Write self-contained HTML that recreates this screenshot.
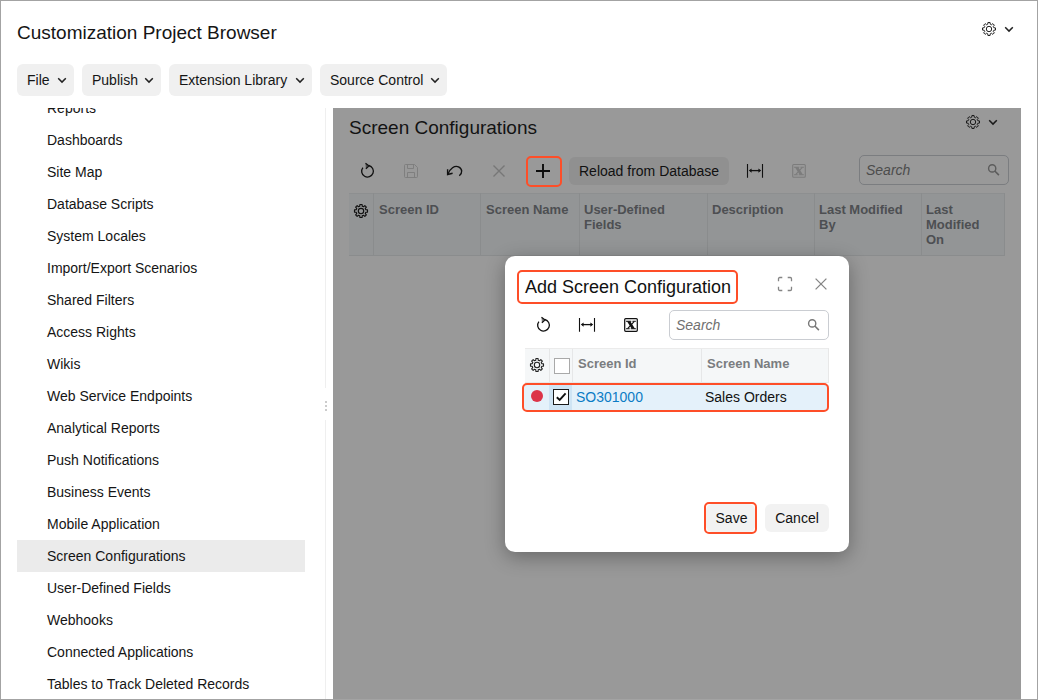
<!DOCTYPE html>
<html><head><meta charset="utf-8"><title>Customization Project Browser</title>
<style>
*{box-sizing:border-box;margin:0;padding:0}
html,body{width:1038px;height:700px;overflow:hidden;background:#fff}
body{font-family:"Liberation Sans",Arial,sans-serif;font-size:14px;color:#151515;position:relative}
.abs{position:absolute}
#frame{position:absolute;left:0;top:0;width:1038px;height:700px;border:1px solid #a3a3a3;z-index:50;pointer-events:none}
#title{left:17px;top:22px;font-size:19px;line-height:22px;white-space:nowrap}
.mbtn{position:absolute;top:64px;height:32px;background:#f0f0f0;border-radius:6px;line-height:32px;padding-left:10px;white-space:nowrap}
.mbtn svg{position:absolute;right:7px;top:13px}
#tree{left:17px;top:108px;width:288px;height:592px;overflow:hidden}
.ti{position:absolute;left:0;width:288px;height:32px;line-height:32px;padding-left:30px;white-space:nowrap}
.ti.sel{background:#ebebeb}
#split{left:325px;top:108px;width:1px;height:592px;background:#ececec}
#panel{left:333px;top:108px;width:688px;height:592px;background:#999}
#ptitle{left:16px;top:9px;font-size:19px;line-height:22px;white-space:nowrap;color:#131313}
.hdr{position:absolute;left:16px;top:85px;width:656px;height:63px;background:#939596;border-top:1px solid #8d8f90;border-bottom:1px solid #8a8c8d}
.hc{position:absolute;top:-1px;height:63px;border-left:1px solid #8a8c8d;font-weight:bold;font-size:13px;line-height:15px;color:#4d4f52;padding:9px 0 0 4px}
#reload{left:236px;top:49px;width:160px;height:28px;border-radius:6px;background:#909090;line-height:28px;padding-left:10px;color:#111;white-space:nowrap}
.search{position:absolute;height:30px;border:1px solid #cacdd2;border-radius:5px;font-style:italic;line-height:29px;padding-left:6px;color:#707070}
#dlg{left:505px;top:256px;width:344px;height:296px;background:#fff;border-radius:10px;box-shadow:0 5px 20px rgba(0,0,0,.32)}
#dtitle{left:20px;top:20px;font-size:18px;line-height:22px;white-space:nowrap;color:#111}
.hl{position:absolute;border:2px solid #fe4e28;border-radius:5px}
#dh{left:20px;top:92px;width:304px;height:35px;background:#f5f7f8;border-top:1px solid #ebebeb;border-bottom:1px solid #e8e8e8;border-right:1px solid #e8e8e8}
.dhc{position:absolute;top:0;height:33px;border-left:1px solid #e6e7e8;font-weight:bold;font-size:13px;line-height:30px;color:#7a7d80;padding-left:5px;white-space:nowrap}
#drow{left:19px;top:129px;width:305px;height:25px;background:#e4f1fa}
.cb{position:absolute;width:16px;height:16px;background:#fff}
.btn{position:absolute;top:248px;height:28px;border-radius:6px;background:#f2f2f2;line-height:28px;text-align:center;color:#111}
</style></head><body>
<div id="frame"></div>
<div id="title" class="abs">Customization Project Browser</div>
<svg class="abs" style="left:981px;top:21px" width="16" height="16" viewBox="0 0 16 16"><path d="M6.79 3.15 L6.92 1.49 L9.08 1.49 L9.21 3.15 L10.58 3.72 L11.84 2.63 L13.37 4.16 L12.28 5.42 L12.85 6.79 L14.51 6.92 L14.51 9.08 L12.85 9.21 L12.28 10.58 L13.37 11.84 L11.84 13.37 L10.58 12.28 L9.21 12.85 L9.08 14.51 L6.92 14.51 L6.79 12.85 L5.42 12.28 L4.16 13.37 L2.63 11.84 L3.72 10.58 L3.15 9.21 L1.49 9.08 L1.49 6.92 L3.15 6.79 L3.72 5.42 L2.63 4.16 L4.16 2.63 L5.42 3.72Z" fill="none" stroke="#222" stroke-width="1.0" stroke-linejoin="round"/><circle cx="8" cy="8" r="2.7" fill="none" stroke="#222" stroke-width="1.0"/></svg>
<svg class="abs" style="left:1004px;top:26px" width="10" height="7" viewBox="0 0 10 7"><path d="M1.2 1.3L5 5.1L8.8 1.3" fill="none" stroke="#222" stroke-width="1.5"/></svg>
<div class="mbtn" style="left:17px;width:57px">File<svg width="10" height="7" viewBox="0 0 10 7"><path d="M1.2 1.3L5 5.1L8.8 1.3" fill="none" stroke="#222" stroke-width="1.5"/></svg></div>
<div class="mbtn" style="left:82px;width:79px">Publish<svg width="10" height="7" viewBox="0 0 10 7"><path d="M1.2 1.3L5 5.1L8.8 1.3" fill="none" stroke="#222" stroke-width="1.5"/></svg></div>
<div class="mbtn" style="left:169px;width:143px">Extension Library<svg width="10" height="7" viewBox="0 0 10 7"><path d="M1.2 1.3L5 5.1L8.8 1.3" fill="none" stroke="#222" stroke-width="1.5"/></svg></div>
<div class="mbtn" style="left:320px;width:127px">Source Control<svg width="10" height="7" viewBox="0 0 10 7"><path d="M1.2 1.3L5 5.1L8.8 1.3" fill="none" stroke="#222" stroke-width="1.5"/></svg></div>

<div id="tree" class="abs">
<div class="ti" style="top:-16px">Reports</div>
<div class="ti" style="top:16px">Dashboards</div>
<div class="ti" style="top:48px">Site Map</div>
<div class="ti" style="top:80px">Database Scripts</div>
<div class="ti" style="top:112px">System Locales</div>
<div class="ti" style="top:144px">Import/Export Scenarios</div>
<div class="ti" style="top:176px">Shared Filters</div>
<div class="ti" style="top:208px">Access Rights</div>
<div class="ti" style="top:240px">Wikis</div>
<div class="ti" style="top:272px">Web Service Endpoints</div>
<div class="ti" style="top:304px">Analytical Reports</div>
<div class="ti" style="top:336px">Push Notifications</div>
<div class="ti" style="top:368px">Business Events</div>
<div class="ti" style="top:400px">Mobile Application</div>
<div class="ti sel" style="top:432px">Screen Configurations</div>
<div class="ti" style="top:464px">User-Defined Fields</div>
<div class="ti" style="top:496px">Webhooks</div>
<div class="ti" style="top:528px">Connected Applications</div>
<div class="ti" style="top:560px">Tables to Track Deleted Records</div>
</div>
<div class="abs" style="left:325px;top:108px;width:1px;height:280px;background:#efefef"></div>
<div class="abs" style="left:325px;top:420px;width:1px;height:280px;background:#efefef"></div>
<div class="abs" style="left:325px;top:401px;width:2px;height:2px;background:#ccc"></div>
<div class="abs" style="left:325px;top:405px;width:2px;height:2px;background:#ccc"></div>
<div class="abs" style="left:325px;top:409px;width:2px;height:2px;background:#ccc"></div>

<div id="panel" class="abs">
<div id="ptitle" class="abs">Screen Configurations</div>
<svg class="abs" style="left:632px;top:6px" width="16" height="16" viewBox="0 0 16 16"><path d="M6.79 3.15 L6.92 1.49 L9.08 1.49 L9.21 3.15 L10.58 3.72 L11.84 2.63 L13.37 4.16 L12.28 5.42 L12.85 6.79 L14.51 6.92 L14.51 9.08 L12.85 9.21 L12.28 10.58 L13.37 11.84 L11.84 13.37 L10.58 12.28 L9.21 12.85 L9.08 14.51 L6.92 14.51 L6.79 12.85 L5.42 12.28 L4.16 13.37 L2.63 11.84 L3.72 10.58 L3.15 9.21 L1.49 9.08 L1.49 6.92 L3.15 6.79 L3.72 5.42 L2.63 4.16 L4.16 2.63 L5.42 3.72Z" fill="none" stroke="#1a1a1a" stroke-width="1.0" stroke-linejoin="round"/><circle cx="8" cy="8" r="2.7" fill="none" stroke="#1a1a1a" stroke-width="1.0"/></svg>
<svg class="abs" style="left:655px;top:11px" width="10" height="7" viewBox="0 0 10 7"><path d="M1.2 1.3L5 5.1L8.8 1.3" fill="none" stroke="#1a1a1a" stroke-width="1.5"/></svg>
<svg class="abs" style="left:25px;top:54.4px" width="18" height="18" viewBox="0 0 18 18"><path d="M10.8 3.5A5.85 5.85 0 1 1 4.9 5.6" fill="none" stroke="#111" stroke-width="1.3"/><path d="M7.5 1.3L11.2 3.9L7.9 6.8" fill="#111" fill-opacity="0.55" stroke="#111" stroke-width="1.2" stroke-linejoin="round"/></svg>
<svg class="abs" style="left:70px;top:55px" width="16" height="16" viewBox="0 0 16 16"><path d="M2.5 1.5H11.5L14.5 4.5V13.5A1 1 0 0 1 13.5 14.5H2.500A1 1 0 0 1 1.5 13.5V2.5A1 1 0 0 1 2.5 1.500Z" fill="none" stroke="#7f7f7f" stroke-width="1"/><path d="M4.5 1.5V5.5H10.5V1.5M4.5 14.5V9.5H11.5V14.5" fill="none" stroke="#7f7f7f" stroke-width="1"/></svg>
<svg class="abs" style="left:113px;top:55px" width="18" height="16" viewBox="0 0 18 16"><path d="M2 11C4 5.500 8.600 2.200 12.500 3.800C16.400 5.600 16.800 10 13.300 12.800" fill="none" stroke="#111" stroke-width="1.4"/><path d="M1.600 6.200V11.500L6.600 10.200" fill="none" stroke="#111" stroke-width="1.4"/></svg>
<svg class="abs" style="left:159px;top:56px" width="14" height="14" viewBox="0 0 14 14"><path d="M1.500 1.500L12.500 12.500M12.500 1.500L1.500 12.500" stroke="#777" stroke-width="1.4" fill="none"/></svg>
<div class="hl" style="left:193px;top:48px;width:36px;height:31px"></div>
<svg class="abs" style="left:202px;top:55px" width="16" height="16" viewBox="0 0 16 16"><path d="M8 1V15M1 8H15" stroke="#0c0c0c" stroke-width="1.900" fill="none"/></svg>
<div id="reload" class="abs">Reload from Database</div>
<svg class="abs" style="left:412px;top:55px" width="20" height="16" viewBox="0 0 20 16"><path d="M2.5 1V14.8M17.5 1V14.8" stroke="#111" stroke-width="1.1" fill="none"/><path d="M5 7.6H15" stroke="#111" stroke-width="1.3" fill="none"/><path d="M3.8 7.6L6.6 5.5V9.7ZM16.2 7.6L13.4 5.5V9.7Z" fill="#111"/></svg>
<svg class="abs" style="left:458px;top:55px" width="16" height="16" viewBox="0 0 16 16"><rect x="1.7" y="1.5" width="12.6" height="12.8" rx="1" fill="none" stroke="#7c7c7c" stroke-width="1.1"/><path d="M4 4.2H7.300L12 11.800H8.700Z" fill="#7c7c7c"/><path d="M11.300 4.300L4.600 11.700" stroke="#7c7c7c" stroke-width="1.1" fill="none"/><path d="M3 3.700H8.300V4.800H3ZM9.400 3.700H12.900V4.700H9.400ZM3 11.200H6.700V12.300H3ZM7.700 11.200H12.900V12.300H7.700Z" fill="#7c7c7c"/></svg>
<div class="search" style="left:526px;top:47px;width:150px;border-color:#7b7d80;color:#4c4c4c">Search</div>
<svg class="abs" style="left:652px;top:54px" width="16" height="16" viewBox="0 0 16 16"><circle cx="7.2" cy="6.400" r="3.600" fill="none" stroke="#5c5c5c" stroke-width="1.400"/><path d="M9.800 9L13.900 13.100" stroke="#5c5c5c" stroke-width="1.600" fill="none"/></svg>
<div class="hdr">
<svg class="abs" style="left:4px;top:8.5px" width="16" height="16" viewBox="0 0 16 16"><path d="M6.79 3.15 L6.92 1.49 L9.08 1.49 L9.21 3.15 L10.58 3.72 L11.84 2.63 L13.37 4.16 L12.28 5.42 L12.85 6.79 L14.51 6.92 L14.51 9.08 L12.85 9.21 L12.28 10.58 L13.37 11.84 L11.84 13.37 L10.58 12.28 L9.21 12.85 L9.08 14.51 L6.92 14.51 L6.79 12.85 L5.42 12.28 L4.16 13.37 L2.63 11.84 L3.72 10.58 L3.15 9.21 L1.49 9.08 L1.49 6.92 L3.15 6.79 L3.72 5.42 L2.63 4.16 L4.16 2.63 L5.42 3.72Z" fill="none" stroke="#111" stroke-width="1.15" stroke-linejoin="round"/><circle cx="8" cy="8" r="2.7" fill="none" stroke="#111" stroke-width="1.15"/></svg>
<div class="hc" style="left:24px;width:107px;padding-left:5px">Screen ID</div>
<div class="hc" style="left:131px;width:99px;padding-left:5px">Screen Name</div>
<div class="hc" style="left:230px;width:128px">User-Defined<br>Fields</div>
<div class="hc" style="left:358px;width:107px">Description</div>
<div class="hc" style="left:465px;width:107px">Last Modified<br>By</div>
<div class="hc" style="left:572px;width:84px;border-right:1px solid #8a8c8d">Last<br>Modified<br>On</div>
</div>
</div>

<div id="dlg" class="abs">
<div class="hl" style="left:12px;top:14px;width:221px;height:34px"></div>
<div id="dtitle" class="abs">Add Screen Configuration</div>
<svg class="abs" style="left:272px;top:20px" width="16" height="16" viewBox="0 0 16 16"><path d="M1.500 5.300V2.700A1.200 1.200 0 0 1 2.700 1.500H5.300M10.700 1.500H13.300A1.200 1.200 0 0 1 14.500 2.700V5.300M14.500 10.700V13.300A1.200 1.200 0 0 1 13.300 14.500H10.700M5.300 14.500H2.700A1.200 1.200 0 0 1 1.500 13.300V10.700" fill="none" stroke="#858585" stroke-width="1.3"/></svg>
<svg class="abs" style="left:309px;top:21px" width="14" height="14" viewBox="0 0 14 14"><path d="M1.600 1.600L12.400 12.400M12.400 1.600L1.600 12.400" stroke="#858585" stroke-width="1.3" fill="none"/></svg>
<svg class="abs" style="left:29px;top:60px" width="18" height="18" viewBox="0 0 18 18"><path d="M10.8 3.5A5.85 5.85 0 1 1 4.9 5.6" fill="none" stroke="#111" stroke-width="1.3"/><path d="M7.5 1.3L11.2 3.9L7.9 6.8" fill="#111" fill-opacity="0.55" stroke="#111" stroke-width="1.2" stroke-linejoin="round"/></svg>
<svg class="abs" style="left:72px;top:61px" width="20" height="16" viewBox="0 0 20 16"><path d="M2.5 1V14.8M17.5 1V14.8" stroke="#111" stroke-width="1.1" fill="none"/><path d="M5 7.6H15" stroke="#111" stroke-width="1.3" fill="none"/><path d="M3.8 7.6L6.6 5.5V9.7ZM16.2 7.6L13.4 5.5V9.7Z" fill="#111"/></svg>
<svg class="abs" style="left:118px;top:61px" width="16" height="16" viewBox="0 0 16 16"><rect x="1.7" y="1.5" width="12.6" height="12.8" rx="1" fill="none" stroke="#111" stroke-width="1.25"/><path d="M4 4.2H7.300L12 11.800H8.700Z" fill="#111"/><path d="M11.300 4.300L4.600 11.700" stroke="#111" stroke-width="1.1" fill="none"/><path d="M3 3.700H8.300V4.800H3ZM9.400 3.700H12.900V4.700H9.400ZM3 11.200H6.700V12.300H3ZM7.700 11.200H12.900V12.300H7.700Z" fill="#111"/></svg>
<div class="search" style="left:164px;top:54px;width:160px">Search</div>
<svg class="abs" style="left:300px;top:61px" width="16" height="16" viewBox="0 0 16 16"><circle cx="7.2" cy="6.400" r="3.600" fill="none" stroke="#777" stroke-width="1.400"/><path d="M9.800 9L13.900 13.100" stroke="#777" stroke-width="1.600" fill="none"/></svg>
<div id="dh" class="abs">
<svg class="abs" style="left:4px;top:8px" width="16" height="16" viewBox="0 0 16 16"><path d="M6.79 3.15 L6.92 1.49 L9.08 1.49 L9.21 3.15 L10.58 3.72 L11.84 2.63 L13.37 4.16 L12.28 5.42 L12.85 6.79 L14.51 6.92 L14.51 9.08 L12.85 9.21 L12.28 10.58 L13.37 11.84 L11.84 13.37 L10.58 12.28 L9.21 12.85 L9.08 14.51 L6.92 14.51 L6.79 12.85 L5.42 12.28 L4.16 13.37 L2.63 11.84 L3.72 10.58 L3.15 9.21 L1.49 9.08 L1.49 6.92 L3.15 6.79 L3.72 5.42 L2.63 4.16 L4.16 2.63 L5.42 3.72Z" fill="none" stroke="#222" stroke-width="1.1" stroke-linejoin="round"/><circle cx="8" cy="8" r="2.7" fill="none" stroke="#222" stroke-width="1.1"/></svg>
<div class="dhc" style="left:24px;width:23px"></div>
<div class="cb" style="left:29px;top:9px;border:1px solid #a9a9a9"></div>
<div class="dhc" style="left:47px;width:130px;padding-left:5px">Screen Id</div>
<div class="dhc" style="left:176px;width:127px">Screen Name</div>
</div>
<div id="drow" class="abs">
<div class="abs" style="left:6.500px;top:5px;width:12px;height:12px;border-radius:50%;background:#dc3449"></div>
<div class="abs" style="left:25px;top:0;width:23px;height:25px;background:#cfe4f4"></div>
<div class="cb" style="left:29px;top:4px;border:1.500px solid #1a1a1a"><svg width="12" height="12" viewBox="0 0 12 12" style="position:absolute;left:0.500px;top:0.500px"><path d="M1.800 6.200L4.700 9L10.600 2.400" fill="none" stroke="#111" stroke-width="1.900"/></svg></div>
<div class="abs" style="left:52px;top:0;line-height:25px;color:#0b7cc5;white-space:nowrap">SO301000</div>
<div class="abs" style="left:181px;top:0;line-height:25px;color:#111;white-space:nowrap">Sales Orders</div>
</div>
<div class="hl" style="left:17px;top:127px;width:307px;height:29px"></div>
<div class="hl" style="left:199px;top:246px;width:53px;height:32px"></div>
<div class="btn" style="left:201px;width:49px;padding-left:2px">Save</div>
<div class="btn" style="left:260px;width:64px">Cancel</div>
</div>
</body></html>
